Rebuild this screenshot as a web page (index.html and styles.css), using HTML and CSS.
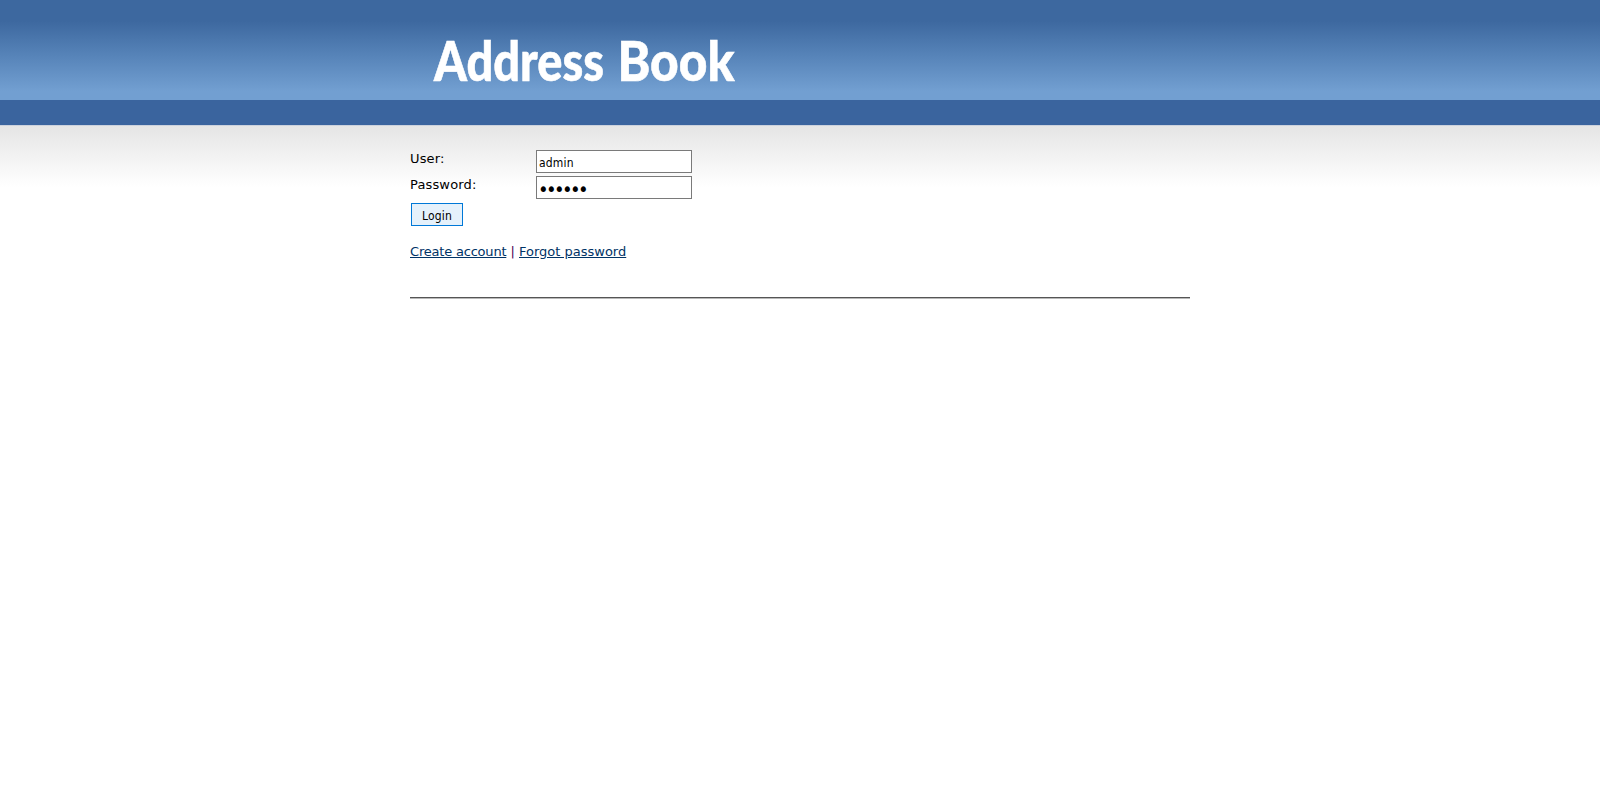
FILE: index.html
```html
<!DOCTYPE html>
<html lang="en">
<head>
<meta charset="utf-8">
<title>Address Book</title>
<link rel="stylesheet" href="styles.css">
</head>
<body>
<header class="header">
  <div class="wrap">
    <svg class="logo" width="330" height="60" viewBox="0 0 330 60" role="img" aria-label="Address Book">
      <text y="50"><tspan x="24" textLength="170" lengthAdjust="spacingAndGlyphs">Address</tspan> <tspan x="207.5" textLength="117" lengthAdjust="spacingAndGlyphs">Book</tspan></text>
    </svg>
  </div>
</header>
<nav class="bar"></nav>
<main class="content">
  <form class="wrap">
    <div class="row">
      <label for="user">User:</label>
      <input id="user" type="text" value="admin">
    </div>
    <div class="row">
      <label for="pass">Password:</label>
      <input id="pass" type="password" value="secret">
    </div>
    <button type="button">Login</button>
    <p class="links"><a class="create" href="#">Create account</a> <span class="sep">|</span> <a href="#">Forgot password</a></p>
    <hr>
  </form>
</main>
</body>
</html>
```
FILE: styles.css
```css
body {
  margin: 0;
  background: #fff;
  color: #000;
  font: 13px/16px "DejaVu Sans", sans-serif;
}
.wrap {
  width: 780px;
  margin: 0 auto;
}
.header {
  height: 100px;
  background: linear-gradient(#3d689f 0, #3d689f 21px, #5683b8 55px, #729fd1 91px, #729fd1 100px);
}
.logo {
  display: block;
  overflow: visible;
  padding-top: 31px;
}
.logo text {
  font: 900 55px Lato, sans-serif;
  fill: #fff;
  stroke: #fff;
  stroke-width: 0.6px;
}
.bar {
  height: 25px;
  background: #3a649e;
}
.content {
  box-sizing: border-box;
  height: 666px;
  padding-top: 24px;
  border-top: 1px solid #ccd2dd;
  background: linear-gradient(#e5e5e5, #fff 61px);
}
.row {
  display: flex;
  height: 23px;
  margin-bottom: 3px;
}
.row label {
  width: 126px;
  padding-top: 1px;
  letter-spacing: 0.15px;
}
input,
button {
  box-sizing: border-box;
  height: 23px;
  font: 12px/18px "DejaVu Sans Condensed", sans-serif;
  letter-spacing: 0.2px;
  color: #000;
}
input {
  width: 156px;
  padding: 3px 2px 0;
  border: 1px solid #7a7a7a;
  border-radius: 0;
  background: #fff;
}
input[type="password"] {
  padding-top: 2px;
  padding-left: 1px;
  font-size: 20px;
  letter-spacing: -2.6px;
}
button {
  display: block;
  width: 52px;
  margin: 4px 0 0 1px;
  padding: 3px 0 0;
  border: 1px solid #0078d7;
  border-radius: 0;
  background: #e5f1fb;
}
.links {
  margin: 18px 0 37px;
}
.links a {
  color: #036;
}
.links .create {
  letter-spacing: -0.2px;
}
.sep {
  color: #4b0055;
}
hr {
  height: 1px;
  margin: 0;
  border: 0;
  border-bottom: 1px solid #b9b9b9;
  background: #555;
}
```
